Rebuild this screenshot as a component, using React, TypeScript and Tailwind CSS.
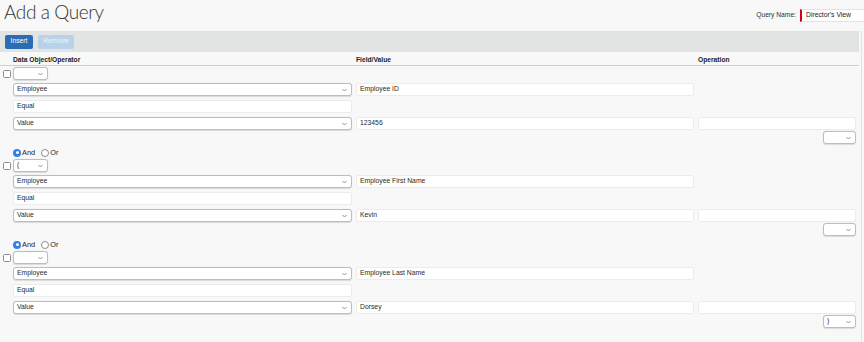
import React from "react";

const Chevron = () => (
  <svg width="5" height="3" viewBox="0 0 5 3" className="absolute right-[4px] top-1/2 -translate-y-1/2">
    <polyline points="0.5,0.5 2.5,2.5 4.5,0.5" fill="none" stroke="#777" strokeWidth="0.8" />
  </svg>
);

const Select = ({ value = "", className = "" }: { value?: string; className?: string }) => (
  <div
    className={`relative h-[13px] bg-white border border-[#bdbdbd] rounded-[3px] shadow-[0_0.5px_1px_rgba(0,0,0,0.12)] flex items-center pl-[3px] text-[6.8px] leading-none text-[#2a2a2a] ${className}`}
  >
    {value}
    <Chevron />
  </div>
);

const Input = ({ value = "", className = "" }: { value?: string; className?: string }) => (
  <div
    className={`h-[13px] bg-white border border-[#ececec] rounded-[2px] flex items-center pl-[3px] text-[6.8px] leading-none text-[#2a2a2a] ${className}`}
  >
    {value}
  </div>
);

const Checkbox = () => (
  <div className="w-[8px] h-[8px] bg-white border border-[#8c8c8c] rounded-[1.5px]" />
);

const Radio = ({ checked }: { checked?: boolean }) =>
  checked ? (
    <div className="w-[8px] h-[8px] rounded-full bg-[#2f80ed] flex items-center justify-center">
      <div className="w-[3px] h-[3px] rounded-full bg-white" />
    </div>
  ) : (
    <div className="w-[8px] h-[8px] rounded-full bg-white border border-[#8c8c8c]" />
  );

const grid = "grid grid-cols-[339px_338px_158px] gap-x-[4px] pl-[13px]";

const Group = ({
  paren,
  field,
  value,
  closing,
  radios,
}: {
  paren: string;
  field: string;
  value: string;
  closing: string;
  radios: boolean;
}) => (
  <div className="flex flex-col">
    {radios && (
      <div className="flex items-center h-[9px] mt-[4px] pl-[13px] text-[7.4px] leading-none text-[#222]">
        <Radio checked />
        <span className="ml-[1px]">And</span>
        <span className="ml-[6px]"><Radio /></span>
        <span className="ml-[1px]">Or</span>
      </div>
    )}
    <div className={`flex items-center pl-[3px] ${radios ? "mt-[2px]" : "mt-[1px]"}`}>
      <Checkbox />
      <Select value={paren} className="ml-[2px] w-[35px]" />
    </div>
    <div className={`${grid} mt-[3px]`}>
      <Select value="Employee" />
      <Input value={field} />
    </div>
    <div className={`${grid} mt-[4px]`}>
      <Input value="Equal" />
    </div>
    <div className={`${grid} mt-[4px]`}>
      <Select value="Value" />
      <Input value={value} />
      <Input />
    </div>
    <div className={`${grid} mt-[1px]`}>
      <div />
      <div />
      <div className="flex justify-end">
        <Select value={closing} className="w-[33px]" />
      </div>
    </div>
  </div>
);

export default function App() {
  return (
    <div className="w-[864px] h-[342px] bg-[#f8f8f8] overflow-hidden text-[#333] font-['Liberation_Sans',Arial,sans-serif]">
      <div className="flex justify-between items-start h-[31px]">
        <div className="pl-[4px] pt-[2px] text-[19px] leading-none font-light text-[#333] font-['Lato',sans-serif] tracking-[-0.4px]">
          Add a Query
        </div>
        <div className="flex items-center mt-[9px] whitespace-nowrap">
          <span className="text-[6.7px] text-[#333] mr-[4px]">Query Name:</span>
          <div className="w-[64px] h-[13px] bg-white border border-[#e3e3e3] border-r-0 border-l-2 border-l-[#d0021b] flex items-center pl-[4px] text-[6.8px] text-[#222]">
            Director's View
          </div>
        </div>
      </div>
      <div className="flex">
        <div className="w-[859px] flex flex-col">
          <div className="h-[21px] bg-[#e2e3e3] flex items-center pl-[5px] gap-[5px]">
            <div className="w-[28px] h-[14px] rounded-[2px] bg-[#2b6cb5] text-white text-[6.8px] flex items-center justify-center">
              Insert
            </div>
            <div className="w-[36px] h-[14px] rounded-[2px] bg-[#b9d2ea] text-[#eef4fa] text-[6.8px] flex items-center justify-center">
              Remove
            </div>
          </div>
          <div className="h-[14px] border-b border-[#cfcfcf] flex items-end pb-[1px]">
            <div className={`${grid} w-full text-[6.7px] font-bold leading-none text-[#222]`}>
              <span>Data Object/Operator</span>
              <span>Field/Value</span>
              <span>Operation</span>
            </div>
          </div>
          <Group paren="" field="Employee ID" value="123456" closing="" radios={false} />
          <Group paren="(" field="Employee First Name" value="Kevin" closing="" radios />
          <Group paren="" field="Employee Last Name" value="Dorsey" closing=")" radios />
        </div>
        <div className="ml-[2px] w-[1px] bg-[#e2e2e2] h-[311px]" />
      </div>
    </div>
  );
}
